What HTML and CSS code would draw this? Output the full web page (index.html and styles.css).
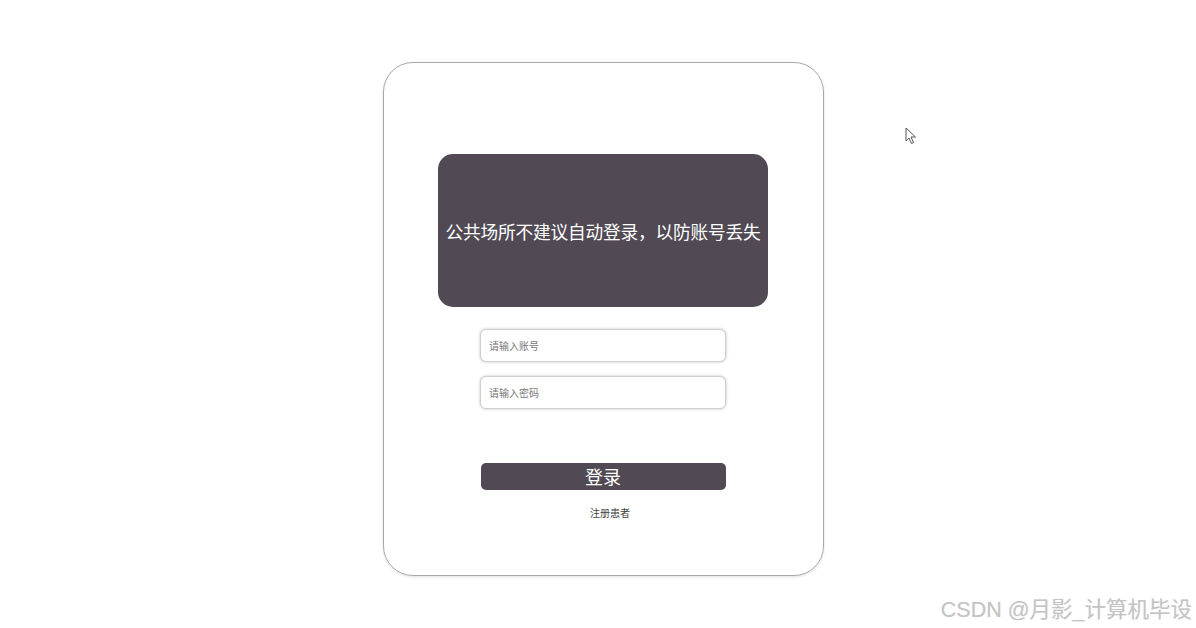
FILE: index.html
```html
<!DOCTYPE html>
<html lang="zh-CN">
<head>
    <meta charset="UTF-8">
    <meta name="viewport" content="width=device-width, initial-scale=1.0">
    <title>登录</title>
    <link rel="stylesheet" href="styles.css">
</head>
<body>
    <div class="page">
        <!-- 登录卡片 -->
        <div class="card">
            <div class="notice">公共场所不建议自动登录，以防账号丢失</div>
            <form class="login-form" onsubmit="return false">
                <input class="field" type="text" placeholder="请输入账号">
                <input class="field" type="password" placeholder="请输入密码">
                <button class="login-btn" type="submit">登录</button>
                <a class="register" href="#">注册患者</a>
            </form>
        </div>
    </div>

    <svg class="cursor" width="12" height="18" viewBox="0 0 12 18">
        <path d="M1 1 L1 14 L4 11 L6.5 16.5 L8.5 15.5 L6 10 L10.5 10 Z" fill="#fff" stroke="#555" stroke-width="1" stroke-linejoin="round"/>
    </svg>

    <div class="watermark">CSDN @月影_计算机毕设</div>
</body>
</html>
```

FILE: styles.css
```css
body {
    margin: 0;
    padding: 0;
    background: #fff;
    font-family: "Noto Sans CJK SC", "Noto Sans", sans-serif;
    height: 628px;
    overflow: hidden;
}

.page {
    padding: 62px 0 0 10px;
}

.card {
    width: 441px;
    height: 514px;
    margin: 0 auto;
    border: 1px solid #a8a8a8;
    border-radius: 30px;
    box-shadow: 0 1px 3px rgba(0, 0, 0, 0.12);
    box-sizing: border-box;
    display: flex;
    flex-direction: column;
    align-items: center;
    padding-top: 91px;
}

.notice {
    width: 330px;
    height: 153px;
    background: #514a55;
    border-radius: 15px;
    color: #fff;
    font-size: 17.7px;
    display: flex;
    align-items: center;
    justify-content: center;
    white-space: nowrap;
    letter-spacing: -0.2px;
}

.login-form {
    display: flex;
    flex-direction: column;
    align-items: center;
    margin-top: 22px;
}

.field {
    width: 246px;
    height: 33px;
    box-sizing: border-box;
    border: 1px solid #cfcfcf;
    border-radius: 6px;
    box-shadow: 0 0 3px rgba(0, 0, 0, 0.25);
    padding: 0 8px;
    font-family: inherit;
    font-size: 10px;
    color: #333;
    outline: none;
    margin-bottom: 14px;
}

.field::placeholder {
    color: #777;
}

.login-btn {
    width: 245px;
    height: 27px;
    margin-top: 40px;
    background: #514a55;
    color: #fff;
    border: none;
    border-radius: 5px;
    font-family: inherit;
    font-size: 18px;
    line-height: 27px;
    padding: 0;
    cursor: pointer;
}

.register {
    margin-top: 15px;
    margin-left: 14px;
    font-size: 10px;
    color: #444;
    text-decoration: none;
}

.cursor {
    position: absolute;
    left: 905px;
    top: 127px;
}

.watermark {
    position: absolute;
    right: 4px;
    top: 592px;
    font-family: "Liberation Sans", "Noto Sans CJK SC", sans-serif;
    font-size: 21.5px;
    color: #c4c4c4;
    text-shadow: 0 0 1px rgba(0, 0, 0, 0.1);
}
```
